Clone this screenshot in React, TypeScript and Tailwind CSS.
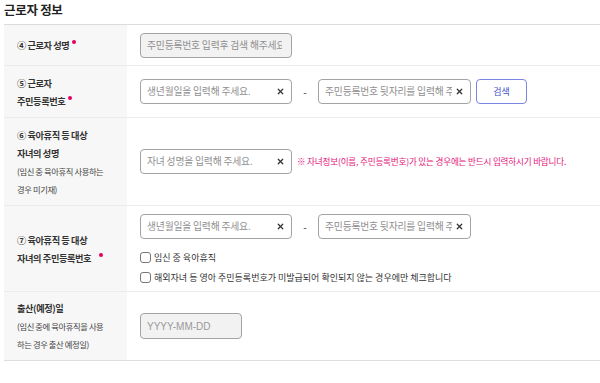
import React from 'react';
import { X } from 'lucide-react';

const font = { fontFamily: '"Noto Sans CJK KR", "Noto Sans", sans-serif' };

const Req = () => <span className="ml-[3px] inline-block h-[4px] w-[4px] -translate-y-[5px] rounded-full bg-[#e6005c]" />;

const TextInput: React.FC<{ placeholder: string; w?: string; clear?: boolean; disabled?: boolean }> = ({
  placeholder,
  w = 'w-[152px]',
  clear = true,
  disabled = false,
}) => (
  <div
    className={`${w} h-[25px] shrink-0 rounded-[4px] border border-[#a3a3a3] flex items-center pl-[6px] ${
      disabled ? 'bg-[#f2f2f2] pr-[9px]' : 'bg-white pr-[6px]'
    }`}
  >
    <span className="flex-1 overflow-hidden whitespace-nowrap text-[9.8px] tracking-[-0.2px] text-[#8f8f8f]">{placeholder}</span>
    {clear && <X size={9} strokeWidth={3.2} className="ml-[3px] shrink-0 text-[#333]" />}
  </div>
);

const Check: React.FC<{ label: string }> = ({ label }) => (
  <div className="flex items-center gap-[3px]">
    <span className="h-[11px] w-[11px] rounded-[3px] border border-[#777] bg-white" />
    <span className="text-[9px] text-[#333]">{label}</span>
  </div>
);

const Row: React.FC<{ h: string; label: React.ReactNode; children: React.ReactNode }> = ({ h, label, children }) => (
  <div className={`flex ${h} border-b border-[#ececec] last:border-[#dedede]`}>
    <div className="w-[123px] shrink-0 bg-[#f7f7f7] pl-[13px] flex flex-col justify-center">{label}</div>
    <div className="flex-1 pl-[13px] flex items-center">{children}</div>
  </div>
);

const L: React.FC<{ children: React.ReactNode; sub?: boolean }> = ({ children, sub }) => (
  <div
    className={`leading-[18px] tracking-[-0.4px] ${
      sub ? 'text-[8.3px] text-[#444] font-normal' : 'text-[9.2px] text-[#333] font-semibold'
    }`}
  >
    {children}
  </div>
);

export default function App() {
  return (
    <div className="w-[600px] h-[383px] bg-white" style={font}>
      <div className="pl-[4px] pt-[1px] h-[24px] text-[12.5px] font-bold tracking-[-0.3px] text-[#222]">근로자 정보</div>
      <div className="ml-[4px] border-t border-[#dcdcdc]">
        <Row
          h="h-[41px]"
          label={
            <L>
              ④ 근로자 성명<Req />
            </L>
          }
        >
          <TextInput placeholder="주민등록번호 입력후 검색 해주세요" clear={false} disabled />
        </Row>
        <Row
          h="h-[52px]"
          label={
            <>
              <L>⑤ 근로자</L>
              <L>
                주민등록번호<Req />
              </L>
            </>
          }
        >
          <TextInput placeholder="생년월일을 입력해 주세요." />
          <span className="w-[26px] text-center text-[10px] text-[#333]">-</span>
          <TextInput placeholder="주민등록번호 뒷자리를 입력해 주세요." w="w-[153px]" />
          <button className="ml-[5px] h-[25px] w-[51px] rounded-[4px] border border-[#7a85e4] bg-white text-[9px] text-[#4450c4]">
            검색
          </button>
        </Row>
        <Row
          h="h-[88px]"
          label={
            <>
              <L>⑥ 육아휴직 등 대상</L>
              <L>자녀의 성명</L>
              <L sub>(임신 중 육아휴직 사용하는</L>
              <L sub>경우 미기재)</L>
            </>
          }
        >
          <TextInput placeholder="자녀 성명을 입력해 주세요." />
          <span className="ml-[5px] text-[8.6px] tracking-[-0.2px] text-[#e4137a]">
            ※ 자녀정보(이름, 주민등록번호)가 있는 경우에는 반드시 입력하시기 바랍니다.
          </span>
        </Row>
        <Row
          h="h-[86px]"
          label={
            <>
              <L>⑦ 육아휴직 등 대상</L>
              <L>
                자녀의 주민등록번호<span className="ml-[5px]" />
                <Req />
              </L>
            </>
          }
        >
          <div className="flex flex-col self-start pt-[8px]">
            <div className="flex items-center">
              <TextInput placeholder="생년월일을 입력해 주세요." />
              <span className="w-[26px] text-center text-[10px] text-[#333]">-</span>
              <TextInput placeholder="주민등록번호 뒷자리를 입력해 주세요." w="w-[153px]" />
            </div>
            <div className="mt-[12px] flex flex-col gap-[6px]">
              <Check label="임신 중 육아휴직" />
              <Check label="해외자녀 등 영아 주민등록번호가 미발급되어 확인되지 않는 경우에만 체크합니다" />
            </div>
          </div>
        </Row>
        <Row
          h="h-[69px]"
          label={
            <>
              <L>출산(예정)일</L>
              <L sub>(임신 중에 육아휴직을 사용</L>
              <L sub>하는 경우 출산 예정일)</L>
            </>
          }
        >
          <div
            className="h-[26px] w-[102px] rounded-[4px] border border-[#a3a3a3] bg-[#f2f2f2] flex items-center pl-[6px] text-[10px] text-[#999]"
            style={{ fontFamily: '"Liberation Sans", Arial, sans-serif' }}
          >
            YYYY-MM-DD
          </div>
        </Row>
      </div>
    </div>
  );
}
